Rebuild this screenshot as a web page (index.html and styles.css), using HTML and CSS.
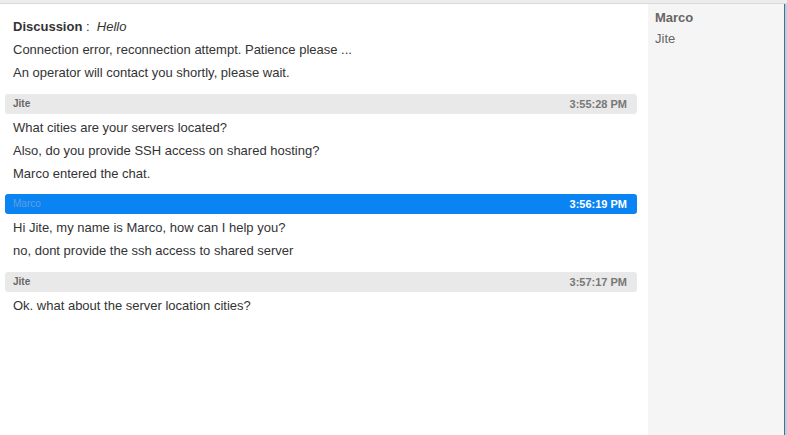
FILE: index.html
```html
<!DOCTYPE html>
<html>
<head>
  <title>Chat</title>
  <meta charset="utf-8">
  <link rel="stylesheet" href="styles.css">
</head>
<body>
  <div class="topbar"></div>
  <div class="chat">
    <div class="messages">
      <div class="line"><b>Discussion</b> :&nbsp; <i>Hello</i></div>
      <div class="line">Connection error, reconnection attempt. Patience please ...</div>
      <div class="line">An operator will contact you shortly, please wait.</div>

      <div class="bar"><span class="who">Jite</span><span class="time">3:55:28 PM</span></div>
      <div class="line">What cities are your servers located?</div>
      <div class="line">Also, do you provide SSH access on shared hosting?</div>
      <div class="line">Marco entered the chat.</div>

      <div class="bar operator"><span class="who">Marco</span><span class="time">3:56:19 PM</span></div>
      <div class="line">Hi Jite, my name is Marco, how can I help you?</div>
      <div class="line">no, dont provide the ssh access to shared server</div>

      <div class="bar"><span class="who">Jite</span><span class="time">3:57:17 PM</span></div>
      <div class="line">Ok. what about the server location cities?</div>
    </div>
    <div class="users">
      <div class="user me">Marco</div>
      <div class="user">Jite</div>
    </div>
    <div class="edge"></div>
  </div>
</body>
</html>
```

FILE: styles.css
```css
html, body { margin: 0; padding: 0; height: 100%; }
body { font-family: "Liberation Sans", Arial, sans-serif; font-size: 13px; color: #333; background: #fff; display: flex; flex-direction: column; overflow: hidden; }
.topbar { height: 3px; background: #ececec; border-bottom: 1px solid #d9d9d9; flex: none; }
.chat { flex: 1; display: flex; min-height: 0; }
.messages { width: 632px; padding: 11px 11px 0 5px; flex: none; }
.line { line-height: 23px; padding-left: 8px; }
.line b { color: #333; }
.bar {
  display: flex;
  justify-content: space-between;
  height: 20px;
  line-height: 20px;
  margin: 10px 0 2px;
  padding: 0 10px 0 8px;
  background: #e9e9e9;
  border-radius: 3px;
  font-size: 11px;
  font-weight: bold;
  color: #777;
}
.bar .who { font-size: 10px; color: #666; }
.bar.operator { background: #0b84f3; color: #fff; margin-top: 9px; }
.bar.operator .who { color: #5f9ee0; font-weight: normal; }
.users { width: 129px; background: #f5f5f5; padding: 3px 0 0 7px; flex: none; }
.user { line-height: 21px; color: #666; }
.user.me { font-weight: bold; }
.edge { flex: 1; border-left: 1px solid #4a6e93; background: #b9cfe2; }
```
